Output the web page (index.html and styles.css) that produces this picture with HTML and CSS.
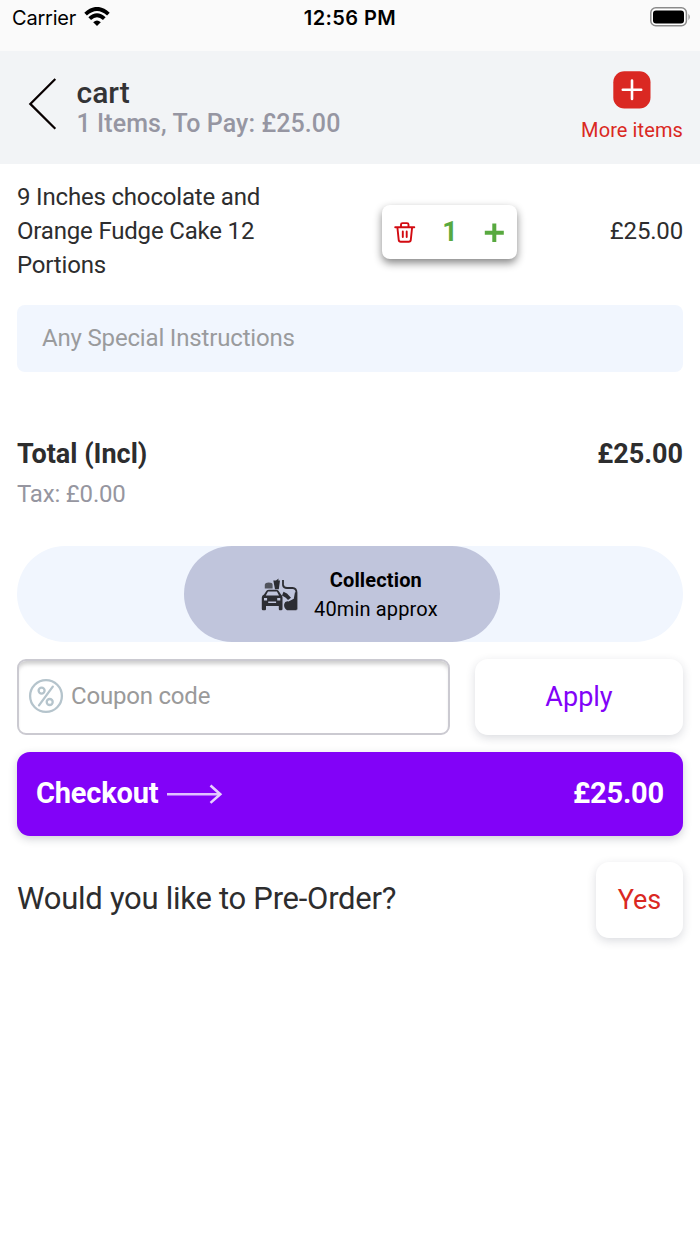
FILE: index.html
```html
<!DOCTYPE html>
<html lang="en">
<head>
<meta charset="utf-8">
<title>Cart</title>
<link rel="stylesheet" href="styles.css">
</head>
<body>
<div class="status">
  <div class="carrier"><span>Carrier</span>
    <svg width="26" height="19" viewBox="0 0 26 19"><g fill="none" stroke="#000" stroke-width="3.9"><path d="M1.6 7.1Q13-3.3 24.4 7.1"/><path d="M5.7 11.6Q13 4.8 20.3 11.6"/></g><path d="M9.2 15.2Q13 11.9 16.8 15.2L13 19Z"/></svg>
  </div>
  <div class="clock">12:56 PM</div>
  <svg class="battery" width="41" height="20" viewBox="0 0 41 20"><rect x=".8" y=".8" width="35.6" height="18" rx="5" fill="#fff" stroke="#8b8b8b" stroke-width="1.5"/><rect x="3" y="3.5" width="31" height="13" rx="3"/><path d="M38.5 6.7Q41 9.9 38.5 13.2Z" fill="#8b8b8b"/></svg>
</div>
<header class="header">
  <svg class="back" width="30" height="54" viewBox="0 0 30 54"><path d="M27.3 2L2.3 26.9L27.3 51.7" fill="none" stroke="#080000" stroke-width="2.2"/></svg>
  <div class="heading"><h1 class="title">cart</h1><p class="subtitle">1 Items, To Pay: £25.00</p></div>
  <div class="more">
    <svg width="38" height="38" viewBox="0 0 38 38"><rect x=".3" y=".3" width="37.2" height="37.2" rx="11" fill="#da2822"/><path d="M9.8 18.7H28.2M19 9.5V27.9" stroke="#fff" stroke-width="2.6" stroke-linecap="round"/></svg>
    <span class="more-label">More items</span>
  </div>
</header>
<main class="main">
  <section class="item">
    <p class="item-name">9 Inches chocolate and Orange Fudge Cake 12 Portions</p>
    <div class="stepper">
      <svg width="22" height="22" viewBox="0 0 22 22" fill="none" stroke="#d20a11" stroke-width="1.9" stroke-linecap="round" stroke-linejoin="round"><path d="M1.2 6.3H20.3M7 5.9V3.6Q7 2.1 8.5 2.1H13Q14.5 2.1 14.5 3.6V5.9M3.4 6.5L4.7 18.8Q4.9 20.7 6.7 20.7H14.8Q16.6 20.7 16.8 18.8L18.1 6.5M8.8 10.5V16.1M12.7 10.5V16.1"/></svg>
      <span class="qty">1</span>
      <svg width="20" height="20" viewBox="0 0 20 20"><path d="M.8 10.7H19.8M10.3 1.5V19.9" stroke="#58a93f" stroke-width="4"/></svg>
    </div>
    <span class="item-price">£25.00</span>
  </section>
  <div class="instructions">Any Special Instructions</div>
  <div class="total"><span>Total (Incl)</span><span>£25.00</span></div>
  <p class="tax">Tax: £0.00</p>
  <div class="modes">
    <div class="mode">
      <svg width="37" height="34" viewBox="0 0 37 34"><g fill="#2c2d33"><path d="M3 17.5L5.5 13.8Q6.2 12.8 8 12.8H15Q16.8 12.8 17.5 13.8L20 17.5Q21.5 18.5 21.5 20.5V32Q21.5 33.2 20.2 33.2H18.7Q17.8 33.2 17.8 32V29H5V32Q5 33.2 4 33.2H2Q.8 33.2 .8 32V20.5Q.8 18.5 3 17.5ZM4.8 18.5H18L15.9 14.4H7ZM3 21V23.4H6.1V21ZM16.2 21V23.4H19.3V21ZM7.2 24.5V26H15.1V24.5Z" fill-rule="evenodd"/><path fill-opacity=".75" d="M3.8 7.8Q4.3 5.5 7.7 5.5Q11.6 5.5 11.6 7.8V11.4H3.8Z"/><path d="M12.3 3.4H15L17.6 1.4L17.3 3.4H19L17.8 12.3H14Z"/><path d="M35.5 33.2H26Q22.5 31 23.2 27Q24 23.8 27.5 24.5L32.8 21.8L34 15Q36 15.5 36 18ZM22.5 14.7L26 16.5L30 20.8L27 23L24.8 20.7L21 18.5Z"/></g><path d="M22 3V8Q22.5 11 26 11H31.5Q35.5 11.3 35.5 15.5V32.5" fill="none" stroke="#2c2d33" stroke-width="1.8"/></svg>
      <div class="mode-text"><strong>Collection</strong><span>40min approx</span></div>
    </div>
  </div>
  <div class="coupon-row">
    <div class="coupon">
      <svg width="36" height="36" viewBox="0 0 36 36" fill="none" stroke="#b5c4cc" stroke-width="2.3" stroke-linecap="round"><circle cx="18" cy="18" r="15.9"/><circle cx="13.6" cy="12.6" r="3"/><circle cx="21.7" cy="24" r="3"/><path d="M24.8 8.6L11 27.4"/></svg>
      <span>Coupon code</span>
    </div>
    <button class="button apply">Apply</button>
  </div>
  <div class="checkout">
    <span>Checkout</span>
    <svg width="56" height="22" viewBox="0 0 56 22" fill="none" stroke="#fff"><path d="M0 12.2H52" stroke="#dfc2ff" stroke-width="2.6"/><path d="M43.5 3.5L53.3 12.2L43.5 20.9" stroke="#e7d0ff" stroke-width="2.6"/></svg>
    <span class="checkout-price">£25.00</span>
  </div>
  <div class="preorder"><span class="question">Would you like to Pre-Order?</span><button class="button yes">Yes</button></div>
</main>
</body>
</html>
```

FILE: styles.css
```css
* { box-sizing: border-box; }
body { margin: 0; min-height: 1244px; background: #fff; color: #2d2d2e; font-family: Roboto, sans-serif; }
h1, p { margin: 0; }
svg { display: block; flex: none; }
.status { height: 51px; padding: 7px 9px 0 12px; background: #fafafa; color: #000; font: 20px/22px Inter, sans-serif; display: grid; grid-template-columns: 1fr auto 1fr; align-items: start; }
.carrier { display: flex; gap: 8px; letter-spacing: -.2px; }
.clock { font-weight: 600; letter-spacing: .4px; margin-right: 3px; }
.battery { justify-self: end; }
.header { height: 113px; padding: 20px 17px 0 28px; background: #f2f4f6; display: flex; align-items: flex-start; }
.back { margin-top: 6px; }
.heading { flex: 1; padding: 7px 0 0 18.5px; }
.title { font-size: 30px; line-height: 30px; font-weight: 500; color: #333335; }
.subtitle { margin-top: 1px; font-size: 25px; line-height: 30px; font-weight: 500; letter-spacing: .1px; color: #9696a2; }
.more { display: flex; flex-direction: column; align-items: center; color: #da2822; }
.more-label { margin-top: 9px; font-size: 20px; line-height: 24px; letter-spacing: .1px; }
.main { padding: 16px 17px 0; }
.item { height: 102px; display: flex; align-items: center; font-size: 24px; letter-spacing: -.18px; }
.item-name { width: 290px; line-height: 34px; margin-right: 75px; }
.stepper { width: 135px; height: 54px; margin-top: 2px; padding: 0 13px 0 12px; border-radius: 8px; display: flex; align-items: center; justify-content: space-between; background: #fff; box-shadow: 0 4px 8px rgba(0,0,0,.48); }
.qty { color: #58a93f; font-size: 27px; line-height: 30px; font-weight: 700; }
.item-price { margin-left: auto; }
.instructions { height: 67px; margin-top: 23px; padding: 0 25px; border-radius: 8px; background: #f1f6fe; color: #9a9b9d; font-size: 24px; line-height: 67px; letter-spacing: -.17px; }
.total { display: flex; justify-content: space-between; margin-top: 66px; font-size: 27px; line-height: 32px; font-weight: 700; }
.tax { margin-top: 9px; color: #9696a0; font-size: 24px; line-height: 30px; letter-spacing: -.18px; }
.modes { height: 96px; margin-top: 37px; border-radius: 48px; background: #f1f6fe; padding-left: 167px; }
.mode { width: 316px; height: 96px; border-radius: 48px; padding-left: 77px; background: #c0c5dc; color: #000; display: flex; align-items: center; gap: 16px; }
.mode-text { display: flex; flex-direction: column; align-items: center; font-size: 20px; line-height: 29px; letter-spacing: .15px; padding-top: 2px; }
.coupon-row { display: flex; justify-content: space-between; margin-top: 17px; }
.coupon { width: 433px; height: 76px; padding: 0 9px 2px; border: 2px solid #cbcad1; border-radius: 9px; box-shadow: inset 0 5px 4px -2px rgba(0,0,0,.2); color: #9a9a9a; font-size: 24px; letter-spacing: -.2px; display: flex; align-items: center; gap: 7px; }
.button { height: 76px; padding: 0; border: 0; border-radius: 13px; background: #fff; box-shadow: 0 3px 10px rgba(40,50,70,.17); font: 27px/32px Roboto, sans-serif; }
.apply { width: 208px; color: #8202f8; }
.checkout { height: 84px; margin-top: 17px; padding: 0 19px 2px; border-radius: 13px; background: #8202f8; color: #fff; box-shadow: 0 3px 9px rgba(40,50,70,.22); display: flex; align-items: center; gap: 9px; font-size: 29px; line-height: 34px; letter-spacing: -.2px; font-weight: 700; }
.checkout-price { margin-left: auto; }
.preorder { display: flex; align-items: center; justify-content: space-between; margin-top: 26px; font-size: 31px; letter-spacing: -.27px; }
.question { padding-bottom: 3px; }
.yes { width: 87px; color: #da2822; }
```
